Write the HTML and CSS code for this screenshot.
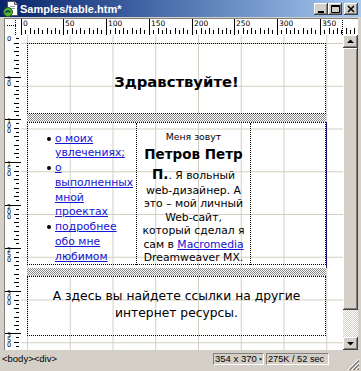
FILE: index.html
```html
<!DOCTYPE html>
<html lang="ru">
<head>
<meta charset="utf-8">
<title>Samples/table.htm*</title>
<link rel="stylesheet" href="styles.css">
</head>
<body>
<div class="window">
  <div class="titlebar">
    <svg class="doc-icon" viewBox="0 0 16 16" width="16" height="16">
      <path d="M5.5 .5h7l3 3v11h-10z" fill="#fff" stroke="#555"/>
      <path d="M12.5 .5v3h3" fill="#ddd" stroke="#555"/>
      <path d="M8 5.5h5M8 7.5h5" stroke="#999"/>
      <circle cx="6" cy="11" r="4.5" fill="#52b531" stroke="#1d5e12"/>
      <path d="M3.6 11.8c1.2-2.4 3.4-2.4 4.6-.4" stroke="#0d2a5a" fill="none" stroke-width="1.4"/>
    </svg>
    <span class="title">Samples/table.htm*</span>
    <div class="caption-buttons">
      <span class="cbtn"><svg viewBox="0 0 14 12" width="14" height="12"><path d="M4 8h6v2H4z" fill="#000"/></svg></span>
      <span class="cbtn"><svg viewBox="0 0 14 12" width="14" height="12"><path d="M3.5 2.5h8v7h-8z" fill="none" stroke="#000"/><path d="M3 3h9v1H3z" fill="#000"/></svg></span>
      <span class="cbtn cbtn-close"><svg viewBox="0 0 14 12" width="14" height="12"><path d="M4 3l6 6M10 3l-6 6" stroke="#000" stroke-width="1.5"/></svg></span>
    </div>
  </div>

  <div class="workspace">
    <div class="frame-left"></div>
    <div class="ruler-corner">
      <svg width="16" height="16" viewBox="0 0 16 16" shape-rendering="crispEdges">
        <path d="M10.5 1v15M2 6.5h9" stroke="#000" stroke-dasharray="1 1"/>
      </svg>
    </div>
    <div class="hruler">
      <svg width="337" height="16" viewBox="0 0 337 16" shape-rendering="crispEdges">
        <path stroke="#000" d="M0.5 0v16M42.5 0v16M85.5 0v16M128.5 0v16M171.5 0v16M213.5 0v16M256.5 0v16M299.5 0v16"/>
        <path stroke="#000" d="M4.5 11v4M13.5 11v4M21.5 11v4M30.5 11v4M38.5 11v4M46.5 11v4M55.5 11v4M63.5 11v4M72.5 11v4M80.5 11v4M89.5 11v4M98.5 11v4M106.5 11v4M115.5 11v4M123.5 11v4M132.5 11v4M141.5 11v4M149.5 11v4M158.5 11v4M166.5 11v4M175.5 11v4M184.5 11v4M192.5 11v4M201.5 11v4M209.5 11v4M217.5 11v4M226.5 11v4M234.5 11v4M243.5 11v4M251.5 11v4M260.5 11v4M269.5 11v4M277.5 11v4M286.5 11v4M294.5 11v4M303.5 11v4M312.5 11v4M320.5 11v4M329.5 11v4"/>
        <path stroke="#000" d="M9.5 9v6M17.5 9v6M26.5 9v6M34.5 9v6M51.5 9v6M59.5 9v6M68.5 9v6M76.5 9v6M94.5 9v6M102.5 9v6M111.5 9v6M119.5 9v6M137.5 9v6M145.5 9v6M154.5 9v6M162.5 9v6M180.5 9v6M188.5 9v6M197.5 9v6M205.5 9v6M222.5 9v6M230.5 9v6M239.5 9v6M247.5 9v6M265.5 9v6M273.5 9v6M282.5 9v6M290.5 9v6M308.5 9v6M316.5 9v6M325.5 9v6M333.5 9v6"/>
        <path stroke="#000" stroke-dasharray="1 1" d="M321.5 1v15"/>
        <g class="rlabel" font-size="7.5">
          <text x="2" y="7">0</text>
          <text x="44" y="7">50</text>
          <text x="87" y="7">100</text>
          <text x="130" y="7">150</text>
          <text x="173" y="7">200</text>
          <text x="215" y="7">250</text>
          <text x="258" y="7">300</text>
          <text x="301" y="7">350</text>
        </g>
      </svg>
    </div>
    <div class="frame-right"></div>

    <div class="vruler">
      <svg class="vruler-ticks" width="16" height="315" viewBox="0 0 16 315" shape-rendering="crispEdges">
        <path stroke="#000" d="M0 42.5h16M0 84.5h16M0 127.5h16M0 170.5h16M0 213.5h16M0 256.5h16M0 298.5h16"/>
        <path stroke="#000" d="M11 3.5h3M11 12.5h3M11 20.5h3M11 29.5h3M11 37.5h3M11 46.5h3M11 55.5h3M11 63.5h3M11 72.5h3M11 80.5h3M11 88.5h3M11 97.5h3M11 105.5h3M11 114.5h3M11 122.5h3M11 131.5h3M11 140.5h3M11 148.5h3M11 157.5h3M11 165.5h3M11 174.5h3M11 183.5h3M11 191.5h3M11 200.5h3M11 208.5h3M11 217.5h3M11 226.5h3M11 234.5h3M11 243.5h3M11 251.5h3M11 260.5h3M11 269.5h3M11 277.5h3M11 286.5h3M11 294.5h3M11 302.5h3M11 311.5h3"/>
        <path stroke="#000" d="M9 8.5h5M9 16.5h5M9 25.5h5M9 33.5h5M9 51.5h5M9 59.5h5M9 68.5h5M9 76.5h5M9 93.5h5M9 101.5h5M9 110.5h5M9 118.5h5M9 136.5h5M9 144.5h5M9 153.5h5M9 161.5h5M9 179.5h5M9 187.5h5M9 196.5h5M9 204.5h5M9 222.5h5M9 230.5h5M9 239.5h5M9 247.5h5M9 265.5h5M9 273.5h5M9 282.5h5M9 290.5h5M9 307.5h5"/>
      </svg>
      <div class="vruler-labels">
        <span class="vlabel">0</span>
        <span class="vlabel">50</span>
        <span class="vlabel">100</span>
        <span class="vlabel">150</span>
        <span class="vlabel">200</span>
        <span class="vlabel">250</span>
        <span class="vlabel">300</span>
        <span class="vlabel">350</span>
      </div>
    </div>

    <div class="canvas">
      <div class="page">
        <div class="box header">
          <h1>Здравствуйте!</h1>
        </div>
        <div class="hatch"></div>
        <div class="table-wrap">
          <div class="layout-table">
            <div class="cell cell-menu">
              <ul class="menu">
                <li><a href="#">о моих увлечениях;</a></li>
                <li><a href="#">о выполненных мной проектах</a></li>
                <li><a href="#">подробнее обо мне любимом</a></li>
              </ul>
            </div>
            <div class="cell cell-about">
              <p><span class="small">Меня зовут</span><br><b class="name">Петров Петр<br>П.</b>. Я вольный<br>web-дизайнер. А<br>это – мой личный<br>Web-сайт,<br>который сделал я<br>сам в <a href="#">Macromedia</a><br>Dreamweaver MX.</p>
            </div>
            <div class="cell cell-empty"></div>
          </div>
        </div>
        <div class="hatch"></div>
        <div class="box footer">
          <p>А здесь вы найдете ссылки на другие интернет ресурсы.</p>
        </div>
      </div>
    </div>

    <div class="scrollbar">
      <div class="sb-btn"><svg viewBox="0 0 15 13" width="15" height="13"><path d="M4 8h7L7.5 4.5z" fill="#000"/></svg></div>
      <div class="sb-thumb"></div>
      <div class="sb-track"></div>
      <div class="sb-btn"><svg viewBox="0 0 15 13" width="15" height="13"><path d="M4 5h7L7.5 8.5z" fill="#000"/></svg></div>
    </div>
  </div>

  <div class="statusbar">
    <span class="tag">&lt;body&gt;&lt;div&gt;</span>
    <span class="sbox sbox-size">354 x 370 <svg viewBox="0 0 5 3" width="5" height="3"><path d="M0 0h5L2.5 3z" fill="#000"/></svg></span>
    <span class="sbox sbox-weight">275K / 52 sec</span>
    <svg class="grip" viewBox="0 0 13 13" width="13" height="13">
      <path d="M12 1L1 12M12 5L5 12M12 9L9 12" stroke="#fff"/>
      <path d="M12 2L2 12M12 3L3 12M12 6L6 12M12 7L7 12M12 10L10 12M12 11L11 12" stroke="#808080"/>
    </svg>
  </div>
</div>
</body>
</html>
```

FILE: styles.css
```css
* { box-sizing: border-box; }

html, body {
  margin: 0;
  padding: 0;
}

body {
  width: 361px;
  height: 371px;
  overflow: hidden;
  background: #d4d0c8;
  font-family: "Liberation Sans", Arial, sans-serif;
}

.window {
  width: 361px;
  height: 371px;
  display: flex;
  flex-direction: column;
  background: #d4d0c8;
}

/* ---------- title bar ---------- */
.titlebar {
  height: 17px;
  margin-bottom: 1px;
  display: flex;
  align-items: center;
  padding: 0 3px 0 2px;
  background: linear-gradient(to right, #0a246a 0%, #3a5c9e 35%, #a6caf0 100%);
}

.doc-icon {
  flex: none;
  display: block;
}

.title {
  margin-left: 2px;
  color: #fff;
  font-weight: bold;
  font-size: 11px;
  white-space: nowrap;
}

.caption-buttons {
  margin-left: auto;
  display: flex;
}

.cbtn {
  width: 14px;
  height: 12px;
  display: block;
  background: #d4d0c8;
  box-shadow: inset -1px -1px #404040, inset 1px 1px #fff, inset -2px -2px #808080;
}

.cbtn svg { display: block; }

.cbtn-close { margin-left: 2px; }

/* ---------- workspace ---------- */
.workspace {
  display: grid;
  grid-template-columns: 4px 17px 322px 15px 3px;
  grid-template-rows: 17px 315px;
}

.frame-left { grid-column: 1; grid-row: 1 / 3; }
.frame-right { grid-column: 5; grid-row: 1 / 3; }

.ruler-corner {
  grid-column: 2;
  grid-row: 1;
  background: #fff;
  border-top: 1px solid #808080;
  border-left: 1px solid #808080;
}

.hruler {
  grid-column: 3 / 5;
  grid-row: 1;
  background: #fff;
  border-top: 1px solid #808080;
  overflow: hidden;
}

.vruler {
  grid-column: 2;
  grid-row: 2;
  display: grid;
  background: #fff;
  border-left: 1px solid #808080;
  overflow: hidden;
}

.vruler > * { grid-area: 1 / 1; }

.ruler-corner svg, .hruler svg, .vruler svg { display: block; }

.rlabel {
  font-family: "DejaVu Sans", sans-serif;
  fill: #000;
}

.vruler-labels {
  display: flex;
  flex-direction: column;
  padding: 0 0 0 2px;
}

.vlabel {
  flex: none;
  width: 4.6px;
  height: 43px;
  font-family: "DejaVu Sans", sans-serif;
  font-size: 6.5px;
  line-height: 5px;
  word-break: break-all;
  color: #000;
}

.vlabel:nth-child(2),
.vlabel:nth-child(7) { height: 42px; }

.vlabel:first-child {
  height: 42px;
  padding-top: 1.5px;
}

/* ---------- design canvas ---------- */
.canvas {
  grid-column: 3;
  grid-row: 2;
  overflow: hidden;
  background-color: #fff;
  background-image:
    linear-gradient(to right, #d3cfc2 1px, transparent 1px),
    linear-gradient(to bottom, #d3cfc2 1px, transparent 1px);
  background-size: 42.75px 42.75px;
  background-position: 6px 8px;
  font-family: "DejaVu Sans", Verdana, sans-serif;
  color: #000;
}

.page {
  padding: 8px 0 0 6px;
  display: flex;
  flex-direction: column;
  align-items: flex-start;
}

.box {
  width: 299px;
  border: 1px dotted #000;
}

.header {
  height: 71px;
  padding-top: 5px;
  display: flex;
  align-items: center;
  justify-content: center;
}

.header h1 {
  margin: 0;
  font-size: 14.8px;
  font-weight: bold;
  line-height: 17px;
}

.hatch {
  width: 299px;
  height: 8px;
  background: repeating-conic-gradient(#8a8a8a 0 25%, #fff 0 50%) 0 0 / 2px 2px;
}

.table-wrap {
  width: 300px;
  height: 146px;
  border-right: 1px solid #1c1c78;
}

.layout-table {
  width: 299px;
  height: 143px;
  display: grid;
  grid-template-columns: 109px 114px 1fr;
  border: 1px dotted #000;
}

.cell { border-right: 1px dotted #000; }
.cell-empty { border-right: 0; }

.cell-menu { padding: 8.5px 0 0 19px; }

.menu {
  margin: 0;
  padding: 0;
  list-style: none;
  font-size: 10.8px;
  line-height: 14.75px;
}

.menu li {
  display: grid;
  grid-template-columns: 8px 1fr;
}

.menu li::before {
  content: "";
  width: 4px;
  height: 4px;
  margin-top: 5px;
  border-radius: 50%;
  background: #000;
}

a {
  color: #1414d4;
  text-decoration: underline;
}

.cell-about {
  padding: 7px 0 0;
  text-align: center;
}

.cell-about p {
  margin: 0;
  font-size: 10.8px;
  line-height: 13.5px;
  white-space: nowrap;
}

.small { font-size: 9.3px; }

.name {
  font-size: 13.5px;
  line-height: 20px;
}

.footer {
  height: 60px;
  padding: 11px 8px 0;
  text-align: center;
}

.footer p {
  margin: 0;
  font-size: 12.3px;
  line-height: 17px;
}

/* ---------- scrollbar ---------- */
.scrollbar {
  grid-column: 4;
  grid-row: 2;
  display: flex;
  flex-direction: column;
}

.sb-btn, .sb-thumb {
  background: #d4d0c8;
  box-shadow: inset -1px -1px #404040, inset 1px 1px #fff, inset -2px -2px #808080;
}

.sb-btn { height: 13px; flex: none; }
.sb-btn svg { display: block; }

.sb-thumb { height: 262px; flex: none; }

.sb-track {
  flex: 1;
  background: repeating-conic-gradient(#fff 0 25%, #d4d0c8 0 50%) 0 0 / 2px 2px;
}

/* ---------- status bar ---------- */
.statusbar {
  height: 21px;
  display: flex;
  align-items: flex-start;
  padding: 3px 0 0 2px;
  font-size: 9.5px;
  color: #000;
}

.tag {
  line-height: 12px;
}

.sbox {
  height: 12px;
  display: flex;
  align-items: center;
  border: 1px solid;
  border-color: #808080 #fff #fff #808080;
  line-height: 10px;
  padding: 0 1px;
  white-space: nowrap;
  overflow: hidden;
}

.sbox-size {
  margin-left: auto;
  width: 51px;
  gap: 2px;
}

.sbox-weight {
  margin-left: 2px;
  width: 63px;
  font-size: 9.2px;
}

.grip {
  margin: 5px 1px 0 18px;
  display: block;
  flex: none;
}
```
